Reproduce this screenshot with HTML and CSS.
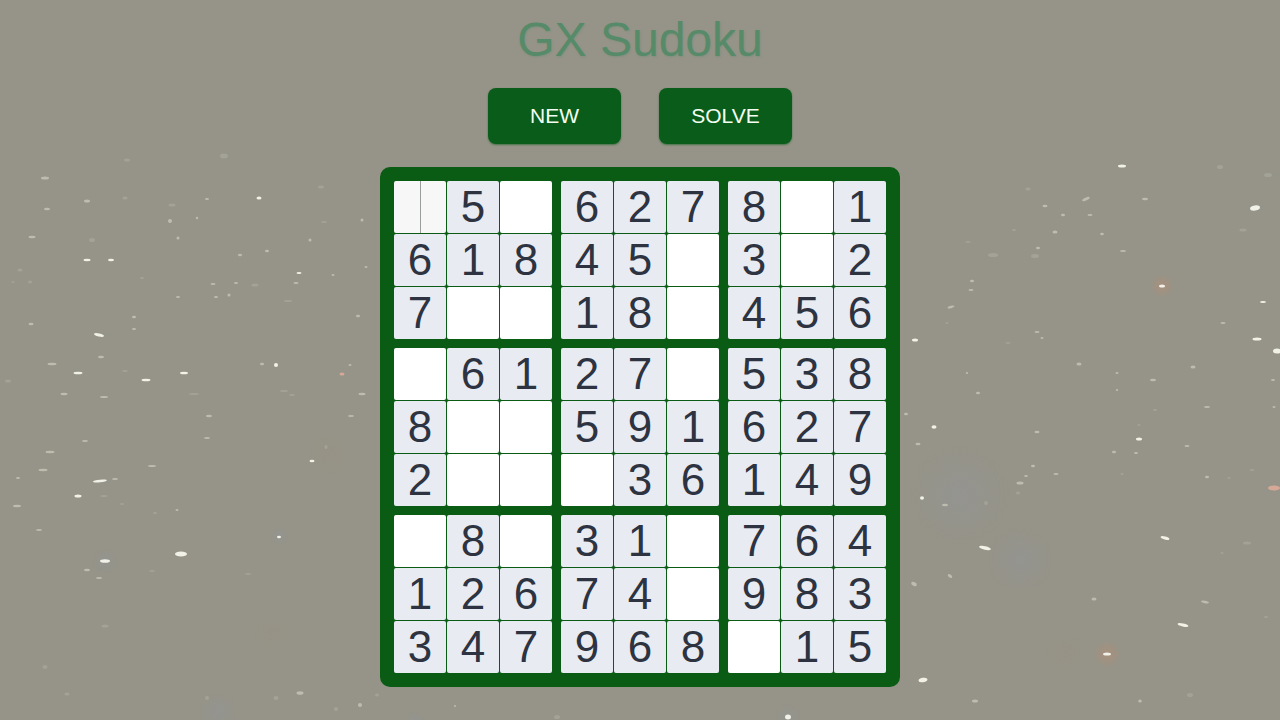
FILE: index.html
```html
<!DOCTYPE html>
<html lang="en">
<head>
<meta charset="utf-8">
<title>GX Sudoku</title>
<link rel="stylesheet" href="styles.css">
</head>
<body>
<svg class="sky" viewBox="0 0 1280 720" aria-hidden="true">
<defs>
<radialGradient id="haze-blue"><stop offset="0" stop-color="#8f95a8" stop-opacity=".28"/><stop offset="1" stop-color="#8f95a8" stop-opacity="0"/></radialGradient>
<radialGradient id="haze-red"><stop offset="0" stop-color="#c98a6a" stop-opacity=".38"/><stop offset="1" stop-color="#c98a6a" stop-opacity="0"/></radialGradient>
<radialGradient id="haze-dim"><stop offset="0" stop-color="#a08a80" stop-opacity=".14"/><stop offset="1" stop-color="#a08a80" stop-opacity="0"/></radialGradient>
</defs>
<circle cx="960" cy="495" r="50" fill="url(#haze-blue)"/>
<circle cx="1020" cy="560" r="34" fill="url(#haze-blue)"/>
<circle cx="105" cy="561" r="13" fill="url(#haze-blue)"/>
<circle cx="279" cy="536" r="10" fill="url(#haze-blue)"/>
<circle cx="218" cy="712" r="20" fill="url(#haze-blue)"/>
<circle cx="788" cy="717" r="13" fill="url(#haze-blue)"/>
<circle cx="415" cy="720" r="9" fill="url(#haze-blue)"/>
<circle cx="1162" cy="286" r="12" fill="url(#haze-red)"/>
<circle cx="1107" cy="654" r="14" fill="url(#haze-red)"/>
<circle cx="1065" cy="652" r="20" fill="url(#haze-dim)"/>
<circle cx="272" cy="632" r="18" fill="url(#haze-dim)"/>
<circle cx="330" cy="455" r="20" fill="url(#haze-dim)"/>
<g class="dim">
<ellipse cx="127" cy="160" rx="3" ry="1.5"/><ellipse cx="224" cy="156" rx="4" ry="2.5"/><ellipse cx="125" cy="198" rx="2.5" ry="1.5"/><ellipse cx="172" cy="205" rx="3.5" ry="1.5"/><ellipse cx="321" cy="187" rx="3" ry="1.5"/><ellipse cx="92" cy="240" rx="3" ry="2"/><ellipse cx="20" cy="270" rx="2.5" ry="1.5"/><ellipse cx="142" cy="278" rx="2" ry="1"/><ellipse cx="30" cy="282" rx="2" ry="1.5"/><ellipse cx="13" cy="282" rx="1.5" ry="1"/><ellipse cx="255" cy="285" rx="3.5" ry="1.5"/><ellipse cx="324" cy="222" rx="3" ry="1"/><ellipse cx="288" cy="301" rx="4" ry="1"/>
<ellipse cx="125" cy="371" rx="3" ry="1"/><ellipse cx="8" cy="381" rx="3" ry="1.5"/><ellipse cx="194" cy="394" rx="5" ry="1"/><ellipse cx="292" cy="395" rx="3" ry="1"/><ellipse cx="284" cy="391" rx="4" ry="1"/><ellipse cx="104" cy="496" rx="3.5" ry="1"/><ellipse cx="122" cy="504" rx="2" ry="1"/><ellipse cx="326" cy="447" rx="1.5" ry="2"/><ellipse cx="155" cy="513" rx="2" ry="1"/><ellipse cx="248" cy="574" rx="3" ry="1"/><ellipse cx="152" cy="571" rx="3" ry="1"/><ellipse cx="105" cy="626" rx="3.5" ry="1.5"/><ellipse cx="67" cy="694" rx="2.5" ry="1.5"/><ellipse cx="45" cy="667" rx="2.5" ry="2"/><ellipse cx="276" cy="698" rx="2.5" ry="2"/><ellipse cx="336" cy="709" rx="2" ry="2"/><ellipse cx="377" cy="695" rx="2" ry="1.5"/><ellipse cx="207" cy="698" rx="2" ry="2"/><ellipse cx="557" cy="717" rx="3" ry="2"/>
<ellipse cx="1220" cy="167" rx="3" ry="2"/><ellipse cx="1268" cy="175" rx="4" ry="2"/><ellipse cx="1028" cy="189" rx="2.5" ry="1.5"/><ellipse cx="993" cy="255" rx="5" ry="2"/><ellipse cx="1035" cy="256" rx="4" ry="2"/><ellipse cx="1243" cy="230" rx="3.5" ry="1.5"/><ellipse cx="968" cy="242" rx="2.5" ry="1"/><ellipse cx="1014" cy="230" rx="2" ry="1"/><ellipse cx="1008" cy="343" rx="2.5" ry="1"/><ellipse cx="947" cy="323" rx="1.5" ry="1"/><ellipse cx="1155" cy="410" rx="2" ry="1"/><ellipse cx="1139" cy="425" rx="1.5" ry="1"/><ellipse cx="1252" cy="470" rx="2.5" ry="1"/><ellipse cx="1229" cy="478" rx="1.5" ry="1"/><ellipse cx="1018" cy="493" rx="2" ry="1.5"/><ellipse cx="986" cy="503" rx="2" ry="2"/><ellipse cx="1122" cy="474" rx="1.5" ry="1"/><ellipse cx="1247" cy="543" rx="4" ry="1.5"/><ellipse cx="1222" cy="553" rx="1.5" ry="1"/><ellipse cx="1190" cy="695" rx="3" ry="2"/><ellipse cx="1266" cy="617" rx="2" ry="1"/>
</g>
<g class="mid">
<ellipse cx="45" cy="178" rx="4" ry="1.5"/><ellipse cx="87" cy="201" rx="3" ry="1.5"/><ellipse cx="47" cy="209" rx="3" ry="1.2"/><ellipse cx="207" cy="199" rx="2" ry="1"/><ellipse cx="170" cy="221" rx="2" ry="2"/><ellipse cx="197" cy="218" rx="1.2" ry="1.2"/><ellipse cx="32" cy="237" rx="3.5" ry="1.2"/><ellipse cx="178" cy="238" rx="1.5" ry="1.5"/><ellipse cx="240" cy="255" rx="2" ry="1.2"/><ellipse cx="267" cy="251" rx="2" ry="1.2"/><ellipse cx="310" cy="240" rx="1.5" ry="1.5"/><ellipse cx="362" cy="220" rx="1.5" ry="1.5"/><ellipse cx="296" cy="283" rx="2.5" ry="1"/><ellipse cx="366" cy="267" rx="1.5" ry="1"/><ellipse cx="333" cy="275" rx="1.5" ry="1"/><ellipse cx="213" cy="284" rx="2.5" ry="1"/><ellipse cx="236" cy="283" rx="2" ry="1"/><ellipse cx="229" cy="295" rx="1.5" ry="1.5"/><ellipse cx="216" cy="297" rx="2" ry="1"/><ellipse cx="178" cy="297" rx="2" ry="1"/><ellipse cx="134" cy="317" rx="2" ry="1.2"/><ellipse cx="358" cy="316" rx="2" ry="1.2"/>
<ellipse cx="31" cy="324" rx="2.5" ry="1.2"/><ellipse cx="134" cy="329" rx="2" ry="1"/><ellipse cx="101" cy="357" rx="3" ry="1.2"/><ellipse cx="52" cy="364" rx="4.5" ry="1.2"/><ellipse cx="64" cy="394" rx="3.5" ry="1.2"/><ellipse cx="104" cy="397" rx="4" ry="1"/><ellipse cx="209" cy="416" rx="3" ry="1.2"/><ellipse cx="207" cy="438" rx="3" ry="1"/><ellipse cx="85" cy="441" rx="3" ry="1"/><ellipse cx="50" cy="452" rx="4.5" ry="1.2"/><ellipse cx="43" cy="470" rx="4.5" ry="1.2"/><ellipse cx="152" cy="466" rx="4" ry="1"/><ellipse cx="115" cy="479" rx="3" ry="1"/><ellipse cx="18" cy="478" rx="2" ry="1"/><ellipse cx="17" cy="506" rx="4" ry="1.2"/><ellipse cx="177" cy="510" rx="1.5" ry="1"/><ellipse cx="262" cy="364" rx="2" ry="1.2"/><ellipse cx="362" cy="394" rx="3.5" ry="1.2"/><ellipse cx="351" cy="416" rx="3" ry="1"/><ellipse cx="350" cy="365" rx="1.5" ry="1"/>
<ellipse cx="39" cy="530" rx="3" ry="1"/><ellipse cx="87" cy="570" rx="3" ry="1.2"/><ellipse cx="99" cy="578" rx="3" ry="1"/><ellipse cx="300" cy="693" rx="3.5" ry="1.8"/><ellipse cx="360" cy="705" rx="2" ry="2"/><ellipse cx="455" cy="706" rx="1" ry="1"/>
<ellipse cx="1086" cy="199" rx="4" ry="1.5" transform="rotate(-25 1086 199)"/><ellipse cx="1045" cy="206" rx="2.5" ry="1.2"/><ellipse cx="1145" cy="199" rx="3" ry="1.2"/><ellipse cx="1063" cy="215" rx="2" ry="1.2"/><ellipse cx="1090" cy="215" rx="2.5" ry="1"/><ellipse cx="1055" cy="232" rx="2.5" ry="1.5"/><ellipse cx="1102" cy="234" rx="1.8" ry="1.2"/><ellipse cx="1038" cy="248" rx="2" ry="1.2"/><ellipse cx="1123" cy="251" rx="3" ry="1"/><ellipse cx="972" cy="281" rx="2" ry="1.2"/><ellipse cx="971" cy="290" rx="2.5" ry="1"/><ellipse cx="951" cy="307" rx="3.5" ry="1.2" transform="rotate(-15 951 307)"/>
<ellipse cx="1037" cy="332" rx="2.5" ry="1"/><ellipse cx="1042" cy="338" rx="1.5" ry="1"/><ellipse cx="1223" cy="323" rx="2.5" ry="1"/><ellipse cx="1079" cy="364" rx="2.5" ry="1.5"/><ellipse cx="1193" cy="367" rx="2.5" ry="1.5"/><ellipse cx="967" cy="373" rx="1.2" ry="1"/><ellipse cx="1153" cy="380" rx="3" ry="1.2"/><ellipse cx="1273" cy="380" rx="2" ry="1"/><ellipse cx="1117" cy="373" rx="1.5" ry="1"/><ellipse cx="978" cy="393" rx="2" ry="1.2"/><ellipse cx="1117" cy="390" rx="1.2" ry="1"/><ellipse cx="1207" cy="407" rx="3" ry="1"/><ellipse cx="1274" cy="407" rx="1.5" ry="1"/><ellipse cx="906" cy="414" rx="2" ry="1.2"/><ellipse cx="1037" cy="432" rx="2.5" ry="1.2"/><ellipse cx="918" cy="444" rx="2.5" ry="1.2"/><ellipse cx="1187" cy="446" rx="2.5" ry="1"/><ellipse cx="1114" cy="452" rx="2" ry="1.2"/><ellipse cx="1136" cy="453" rx="2" ry="1"/><ellipse cx="1033" cy="466" rx="2" ry="1.2"/><ellipse cx="1026" cy="476" rx="1.8" ry="1"/><ellipse cx="1056" cy="474" rx="2.5" ry="1"/><ellipse cx="1020" cy="483" rx="3.5" ry="1.5"/><ellipse cx="1207" cy="477" rx="2" ry="1.2"/><ellipse cx="945" cy="505" rx="3" ry="1.2"/>
<ellipse cx="950" cy="576" rx="2.5" ry="1.5" transform="rotate(35 950 576)"/><ellipse cx="914" cy="584" rx="3" ry="1.8" transform="rotate(25 914 584)"/><ellipse cx="1094" cy="599" rx="2.5" ry="1.5"/><ellipse cx="1205" cy="602" rx="4" ry="1.2" transform="rotate(12 1205 602)"/><ellipse cx="975" cy="701" rx="3" ry="1.5"/><ellipse cx="1140" cy="701" rx="1.8" ry="1.5"/>
</g>
<g class="bright">
<ellipse cx="259" cy="198" rx="2.5" ry="1.5"/><ellipse cx="87" cy="260" rx="3.5" ry="1.2"/><ellipse cx="111" cy="260" rx="3" ry="1.2"/><ellipse cx="299" cy="273" rx="2.5" ry="1"/>
<ellipse cx="99" cy="335" rx="5" ry="1.5" transform="rotate(12 99 335)"/><ellipse cx="78" cy="373" rx="4.5" ry="1.3"/><ellipse cx="146" cy="380" rx="4.5" ry="1.3"/><ellipse cx="184" cy="373" rx="4" ry="1.3"/><ellipse cx="100" cy="481" rx="7" ry="1.3" transform="rotate(-6 100 481)"/><ellipse cx="78" cy="496" rx="3.5" ry="1.5"/><ellipse cx="276" cy="365" rx="2" ry="2"/><ellipse cx="312" cy="461" rx="2.5" ry="1.3"/>
<ellipse cx="181" cy="554" rx="6" ry="2.5"/>
<ellipse cx="1122" cy="166" rx="4" ry="1.5"/><ellipse cx="1255" cy="208" rx="5" ry="2.5" transform="rotate(-8 1255 208)"/><ellipse cx="1263" cy="302" rx="3" ry="1"/>
<ellipse cx="915" cy="340" rx="3" ry="1.5"/><ellipse cx="1257" cy="339" rx="4.5" ry="1.5"/><ellipse cx="1277" cy="351" rx="4" ry="2.5"/><ellipse cx="1139" cy="439" rx="3" ry="1.5"/><ellipse cx="922" cy="498" rx="2" ry="1.8"/>
<ellipse cx="985" cy="548" rx="6" ry="1.8" transform="rotate(12 985 548)"/><ellipse cx="1165" cy="538" rx="4.5" ry="1.6" transform="rotate(15 1165 538)"/><ellipse cx="1183" cy="625" rx="5.5" ry="1.5" transform="rotate(12 1183 625)"/><ellipse cx="923" cy="680" rx="4.5" ry="2.2" transform="rotate(-10 923 680)"/>
<ellipse cx="1162" cy="286" rx="3" ry="1.6"/><ellipse cx="1107" cy="654" rx="4" ry="1.6"/>
<ellipse cx="105" cy="561" rx="5" ry="1.8"/><ellipse cx="279" cy="537" rx="2" ry="1.2"/><ellipse cx="934" cy="427" rx="2.5" ry="1.8"/><ellipse cx="788" cy="717" rx="3" ry="2.5"/>
</g>
<g class="warm"><ellipse cx="342" cy="374" rx="2.5" ry="1.5"/><ellipse cx="1274" cy="488" rx="6" ry="2.5"/></g>
</svg>
<main class="page">
<h1 class="title">GX Sudoku</h1>
<div class="actions">
<button class="btn" type="button">NEW</button>
<button class="btn" type="button">SOLVE</button>
</div>
<div class="board">
<div class="box">
<div class="cell empty first"><span class="caret"></span></div><div class="cell">5</div><div class="cell empty"></div>
<div class="cell">6</div><div class="cell">1</div><div class="cell">8</div>
<div class="cell">7</div><div class="cell empty"></div><div class="cell empty"></div>
</div>
<div class="box">
<div class="cell">6</div><div class="cell">2</div><div class="cell">7</div>
<div class="cell">4</div><div class="cell">5</div><div class="cell empty"></div>
<div class="cell">1</div><div class="cell">8</div><div class="cell empty"></div>
</div>
<div class="box">
<div class="cell">8</div><div class="cell empty"></div><div class="cell">1</div>
<div class="cell">3</div><div class="cell empty"></div><div class="cell">2</div>
<div class="cell">4</div><div class="cell">5</div><div class="cell">6</div>
</div>
<div class="box">
<div class="cell empty"></div><div class="cell">6</div><div class="cell">1</div>
<div class="cell">8</div><div class="cell empty"></div><div class="cell empty"></div>
<div class="cell">2</div><div class="cell empty"></div><div class="cell empty"></div>
</div>
<div class="box">
<div class="cell">2</div><div class="cell">7</div><div class="cell empty"></div>
<div class="cell">5</div><div class="cell">9</div><div class="cell">1</div>
<div class="cell empty"></div><div class="cell">3</div><div class="cell">6</div>
</div>
<div class="box">
<div class="cell">5</div><div class="cell">3</div><div class="cell">8</div>
<div class="cell">6</div><div class="cell">2</div><div class="cell">7</div>
<div class="cell">1</div><div class="cell">4</div><div class="cell">9</div>
</div>
<div class="box">
<div class="cell empty"></div><div class="cell">8</div><div class="cell empty"></div>
<div class="cell">1</div><div class="cell">2</div><div class="cell">6</div>
<div class="cell">3</div><div class="cell">4</div><div class="cell">7</div>
</div>
<div class="box">
<div class="cell">3</div><div class="cell">1</div><div class="cell empty"></div>
<div class="cell">7</div><div class="cell">4</div><div class="cell empty"></div>
<div class="cell">9</div><div class="cell">6</div><div class="cell">8</div>
</div>
<div class="box">
<div class="cell">7</div><div class="cell">6</div><div class="cell">4</div>
<div class="cell">9</div><div class="cell">8</div><div class="cell">3</div>
<div class="cell empty"></div><div class="cell">1</div><div class="cell">5</div>
</div>
</div>
</main>
</body>
</html>
```
FILE: styles.css
```css
* {
  box-sizing: border-box;
}

html,
body {
  margin: 0;
  height: 100%;
}

body {
  position: relative;
  overflow: hidden;
  background: #969488;
  font-family: "Liberation Sans", Arial, sans-serif;
}

.sky {
  position: absolute;
  inset: 0;
  width: 1280px;
  height: 720px;
  filter: blur(0.5px);
}

.dim {
  fill: #a3a296;
}

.mid {
  fill: #bdbcaf;
}

.bright {
  fill: #f1f1e8;
}

.warm {
  fill: #d5a898;
}

.page {
  position: relative;
  display: flex;
  flex-direction: column;
  align-items: center;
}

.title {
  margin: 12px 0 0;
  font-size: 48px;
  font-weight: 400;
  line-height: 55px;
  color: #568a69;
  text-shadow: 1px 1px 2px rgba(86, 138, 105, 0.35);
}

.actions {
  display: flex;
  gap: 38px;
  margin-top: 21px;
}

.btn {
  width: 133px;
  height: 56px;
  padding: 0;
  border: 0;
  border-radius: 8px;
  background: #0a5c1b;
  box-shadow: 0 1px 2px rgba(11, 92, 28, 0.6);
  color: #f2fff2;
  font: 400 21px "Liberation Sans", Arial, sans-serif;
}

.board {
  display: grid;
  grid-template-columns: repeat(3, 158px);
  gap: 9px;
  margin-top: 23px;
  padding: 14px;
  border-radius: 10px;
  background: #0a5c15;
}

.box {
  display: grid;
  grid-template-columns: repeat(3, 52px);
  grid-auto-rows: 52px;
  gap: 1px;
}

.cell {
  display: flex;
  align-items: center;
  justify-content: center;
  border-radius: 2px;
  background: #e8ebf2;
  color: #2d3340;
  font-size: 44px;
  line-height: 52px;
}

.empty {
  background: #fff;
}

.first {
  position: relative;
  background: #f6f7f6;
}

.caret {
  position: absolute;
  top: 0;
  bottom: 0;
  left: 26px;
  width: 1px;
  background: #9a9e9a;
}
```
